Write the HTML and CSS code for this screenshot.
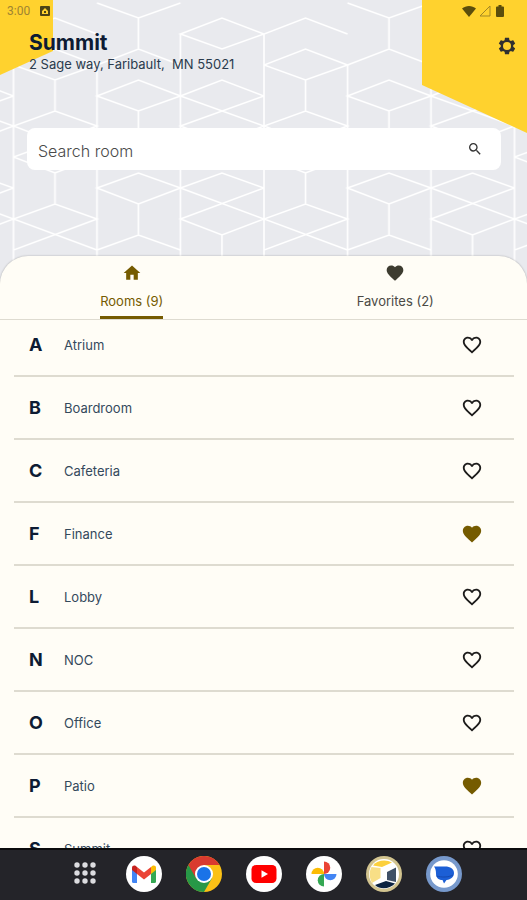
FILE: index.html
```html
<!DOCTYPE html>
<html lang="en">
  <head>
    <meta charset="utf-8">
    <meta name="viewport" content="width=device-width, initial-scale=1">
    <title>Summit</title>
    <link rel="stylesheet" href="styles.css">
  </head>
  <body>
    <!-- shared icons -->
    <svg class="sprite" aria-hidden="true">
      <symbol id="heart" viewBox="0 0 24 24">
        <path d="M12 21.35l-1.45-1.32C5.4 15.36 2 12.28 2 8.5 2 5.42 4.42 3 7.5 3c1.74 0 3.41.81 4.5 2.09C13.09 3.81 14.76 3 16.5 3 19.58 3 22 5.42 22 8.5c0 3.78-3.4 6.86-8.55 11.54L12 21.35z"/>
      </symbol>
      <symbol id="heart-outline" viewBox="0 0 24 24">
        <path d="M16.5 3c-1.74 0-3.41.81-4.5 2.09C10.91 3.81 9.24 3 7.5 3 4.42 3 2 5.42 2 8.5c0 3.78 3.4 6.86 8.55 11.54L12 21.35l1.45-1.32C18.6 15.36 22 12.28 22 8.5 22 5.42 19.58 3 16.5 3zm-4.4 15.55l-.1.1-.1-.1C7.14 14.24 4 11.39 4 8.5 4 6.5 5.5 5 7.5 5c1.54 0 3.04.99 3.57 2.36h1.87C13.46 5.99 14.96 5 16.5 5c2 0 3.5 1.5 3.5 3.5 0 2.89-3.14 5.74-7.9 10.05z"/>
      </symbol>
    </svg>

    <header class="hero">
      <svg class="hero-pattern" aria-hidden="true">
        <defs>
          <pattern id="cubes" x="13.5" y="0" width="250.5" height="300" patternUnits="userSpaceOnUse">
            <g fill="none" stroke="#fff" stroke-width="1.6">
              <path d="M0 34 41.5 18 83.5 34M0 65 41.5 49 83.5 65 41.5 80ZM41.5 80V111M0 126 41.5 111 83.5 126 41.5 142ZM0 157 41.5 142 83.5 157 41.5 173ZM41.5 173V204M0 250 83.5 219 41.5 204 0 219 83.5 250M0 65V300"/>
              <path d="M83.5 3 125 18 167 3M125 18V49M83.5 65 125 49 167 65M83.5 96 125 80 167 96 125 111ZM125 111V142M83.5 188 125 173 167 188 125 204ZM125 204V235M83.5 250 125 235 167 250M83.5 65V300"/>
              <path d="M167 34 208.5 18 250.5 34 208.5 49ZM167 126 250.5 96 208.5 80 167 96 250.5 126 208.5 142ZM167 219 250.5 188 208.5 173 167 188 250.5 219 208.5 235ZM208.5 235V300M167 34V300M250.5 34V300M0 34V65"/>
            </g>
          </pattern>
        </defs>
        <rect width="100%" height="100%" fill="url(#cubes)"/>
      </svg>
      <div class="corner corner-left"></div>
      <div class="corner corner-right"></div>

      <div class="status-bar">
        <span class="clock">3:00</span>
        <svg width="10" height="10" viewBox="0 0 10 10"><path fill="#4d4316" fill-rule="evenodd" d="M1 0h8a1 1 0 0 1 1 1v8a1 1 0 0 1-1 1H1a1 1 0 0 1-1-1V1a1 1 0 0 1 1-1zm1 8h6V5L5 2 2 5zm2-1V5h2v2z"/></svg>
        <span class="spacer"></span>
        <svg class="wifi" width="14" height="12" viewBox="0 0 14 12"><path fill="#5b4d0c" d="M0 3.5C4 0 10 0 14 3.500L7 12z"/></svg>
        <svg class="signal" width="12" height="12" viewBox="0 0 12 12"><path fill="none" stroke="#a38724" d="M1 11 11 1V11z"/></svg>
        <svg class="battery" width="8" height="12" viewBox="0 0 8 12"><path fill="#5b4d0c" d="M2.500 0h3v1.500H7a1 1 0 0 1 1 1V11a1 1 0 0 1-1 1H1a1 1 0 0 1-1-1V2.500a1 1 0 0 1 1-1h1.500z"/></svg>
      </div>

      <div class="site">
        <div>
          <h1>Summit</h1>
          <p>2 Sage way, Faribault,&nbsp; MN 55021</p>
        </div>
        <button class="icon-button" aria-label="Settings">
          <svg width="20" height="20" viewBox="0 0 24 24"><path fill="#303030" d="M19.430 12.980c.04-.32.07-.64.07-.98s-.03-.66-.07-.98l2.110-1.650c.19-.15.24-.42.12-.64l-2-3.460c-.12-.22-.39-.3-.61-.22l-2.490 1c-.52-.4-1.080-.73-1.690-.98l-.38-2.650C14.460 2.180 14.250 2 14 2h-4c-.25 0-.46.18-.49.42l-.38 2.650c-.61.25-1.170.59-1.690.98l-2.490-1c-.23-.09-.49 0-.61.22l-2 3.460c-.13.22-.07.49.12.64l2.110 1.650c-.04.32-.07.65-.07.98s.03.66.07.98l-2.110 1.650c-.19.15-.24.42-.12.64l2 3.460c.12.22.39.3.61.22l2.490-1c.52.4 1.080.73 1.690.98l.38 2.650c.03.24.24.42.49.42h4c.25 0 .46-.18.49-.42l.38-2.650c.61-.25 1.170-.59 1.690-.98l2.490 1c.23.09.49 0 .61-.22l2-3.460c.12-.22.07-.49-.12-.64l-2.110-1.650zM12 16.800a4.800 4.800 0 1 1 0-9.600 4.800 4.800 0 0 1 0 9.600z"/></svg>
        </button>
      </div>

      <form class="search">
        <input type="search" placeholder="Search room" aria-label="Search room">
        <button class="icon-button" type="submit" aria-label="Search">
          <svg width="16" height="16" viewBox="0 0 24 24"><path fill="#333" d="M15.500 14h-.79l-.28-.27A6.470 6.470 0 0 0 16 9.500 6.500 6.500 0 1 0 9.500 16c1.610 0 3.090-.59 4.230-1.570l.27.28v.79l5 4.990L20.490 19l-4.990-5zm-6 0C7.010 14 5 11.990 5 9.500S7.010 5 9.500 5 14 7.010 14 9.500 11.990 14 9.500 14z"/></svg>
        </button>
      </form>
    </header>

    <main class="sheet">
      <nav class="tabs">
        <button class="tab active">
          <svg width="20" height="20" viewBox="0 0 24 24"><path d="M10 20v-6h4v6h5v-8h3L12 3 2 12h3v8z"/></svg>
          <span>Rooms (9)</span>
        </button>
        <button class="tab">
          <svg width="22" height="20"><use href="#heart"/></svg>
          <span>Favorites (2)</span>
        </button>
      </nav>

      <div class="list-scroll">
        <ul class="rooms">
          <li><b>A</b><span>Atrium</span><button class="fav" aria-label="Favorite Atrium"><svg><use href="#heart-outline"/></svg></button></li>
          <li><b>B</b><span>Boardroom</span><button class="fav" aria-label="Favorite Boardroom"><svg><use href="#heart-outline"/></svg></button></li>
          <li><b>C</b><span>Cafeteria</span><button class="fav" aria-label="Favorite Cafeteria"><svg><use href="#heart-outline"/></svg></button></li>
          <li><b>F</b><span>Finance</span><button class="fav on" aria-label="Favorite Finance"><svg><use href="#heart"/></svg></button></li>
          <li><b>L</b><span>Lobby</span><button class="fav" aria-label="Favorite Lobby"><svg><use href="#heart-outline"/></svg></button></li>
          <li><b>N</b><span>NOC</span><button class="fav" aria-label="Favorite NOC"><svg><use href="#heart-outline"/></svg></button></li>
          <li><b>O</b><span>Office</span><button class="fav" aria-label="Favorite Office"><svg><use href="#heart-outline"/></svg></button></li>
          <li><b>P</b><span>Patio</span><button class="fav on" aria-label="Favorite Patio"><svg><use href="#heart"/></svg></button></li>
          <li><b>S</b><span>Summit</span><button class="fav" aria-label="Favorite Summit"><svg><use href="#heart-outline"/></svg></button></li>
        </ul>
      </div>
    </main>

    <footer class="dock">
      <button aria-label="All apps">
        <svg viewBox="0 0 36 36" fill="#dcdce0"><circle cx="11" cy="9" r="2.700"/><circle cx="19" cy="9" r="2.700"/><circle cx="27" cy="9" r="2.700"/><circle cx="11" cy="17" r="2.700"/><circle cx="19" cy="17" r="2.700"/><circle cx="27" cy="17" r="2.700"/><circle cx="11" cy="25" r="2.700"/><circle cx="19" cy="25" r="2.700"/><circle cx="27" cy="25" r="2.700"/></svg>
      </button>
      <button aria-label="Gmail">
        <svg viewBox="0 0 36 36">
          <circle cx="18" cy="18" r="18" fill="#fff"/>
          <path fill="#4285f4" d="M6 12l5 4v11H7.500A1.500 1.500 0 0 1 6 25.500z"/>
          <path fill="#34a853" d="M30 12l-5 4v11h3.500a1.500 1.500 0 0 0 1.500-1.500z"/>
          <path fill="#fbbc04" d="M25 11l1.500-1.200c1.500-1 3.500 0 3.500 1.800V14l-5 4z"/>
          <path fill="#c5221f" d="M11 11L9.500 9.800C8 8.800 6 9.800 6 11.600V14l5 4z"/>
          <path fill="#ea4335" d="M11 11l7 5.500 7-5.500v7l-7 5.500-7-5.500z"/>
        </svg>
      </button>
      <button aria-label="Chrome">
        <svg viewBox="0 0 36 36">
          <circle cx="18" cy="18" r="18" fill="#fbc116"/>
          <path fill="#279847" d="M18 18 2.400 9A18 18 0 0 0 18 36l7.800-13.500z"/>
          <path fill="#d93a2f" d="M18 18 10.200 22.500 2.400 9A18 18 0 0 1 33.600 9H18z"/>
          <circle cx="18" cy="18" r="9" fill="#fff"/>
          <circle cx="18" cy="18" r="7" fill="#1a73e8"/>
        </svg>
      </button>
      <button aria-label="YouTube">
        <svg viewBox="0 0 36 36">
          <circle cx="18" cy="18" r="18" fill="#fff"/>
          <rect x="5.500" y="9" width="25" height="18" rx="4.500" fill="#f00"/>
          <path fill="#fff" d="M15.500 14.200v7.600L22 18z"/>
        </svg>
      </button>
      <button aria-label="Photos">
        <svg viewBox="0 0 36 36">
          <circle cx="18" cy="18" r="18" fill="#fff"/>
          <path fill="#ea4335" d="M18 5.500a6.250 6.250 0 0 1 0 12.500z"/>
          <path fill="#4285f4" d="M30.500 18a6.250 6.250 0 0 1-12.500 0z"/>
          <path fill="#34a853" d="M18 30.500a6.250 6.250 0 0 1 0-12.500z"/>
          <path fill="#fbbc04" d="M5.500 18a6.250 6.250 0 0 1 12.500 0z"/>
        </svg>
      </button>
      <button aria-label="Room booking">
        <svg viewBox="0 0 36 36">
          <circle cx="18" cy="18" r="18" fill="#d2c490"/>
          <circle cx="18" cy="18" r="15" fill="#fff"/>
          <path fill="#fcd03c" d="M7 9.500C11 4 20 3 26 6.500L16 11z"/>
          <path fill="#f8df86" d="M5.500 11 14.500 12V22L6 27C3 21 3 16 5.500 11z"/>
          <path fill="#3f5066" d="M21 16l9-4.500V26l-9-2z"/>
          <path fill="#0c2340" d="M9 29l11-4 9 2.500C24 33 14 34 9 29z"/>
        </svg>
      </button>
      <button aria-label="Messages">
        <svg viewBox="0 0 36 36">
          <circle cx="18" cy="18" r="18" fill="#7799cc"/>
          <circle cx="18" cy="18" r="13.800" fill="#fff"/>
          <path fill="#1c5fd6" d="M8 10.500h11c5.500 0 9 2.500 9 6.500s-3 6.500-7.500 7L18 27.500 16.500 24C12 24 10 21.500 10 17.500c0-3-.5-5-2-7z"/>
          <path fill="none" stroke="#1549b0" stroke-width="1" d="M10.500 20c5 1.500 12 1.500 16.500-1"/>
        </svg>
      </button>
    </footer>
  </body>
</html>
```
FILE: styles.css
```css
:root {
  --yellow: #ffd22e;
  --gold: #755b00;
  --navy: #0d1b33;
  --paper: #fffdf6;
  --line: #dedbd0;
}
* {
  box-sizing: border-box;
}
html,
body {
  height: 100%;
}
body {
  display: flex;
  flex-direction: column;
  margin: 0;
  overflow: hidden;
  background: #e9eaee;
  color: var(--navy);
  font-family: Inter, "Open Sans", sans-serif;
}
h1,
p,
ul {
  margin: 0;
  padding: 0;
}
button {
  padding: 0;
  border: 0;
  background: none;
  color: inherit;
  font: inherit;
  cursor: pointer;
}
svg {
  display: block;
}
.sprite {
  display: none;
}

/* header */
.hero {
  position: relative;
  flex: none;
  padding-bottom: 86px;
}
.hero-pattern {
  position: absolute;
  top: 0;
  left: 0;
  width: 100%;
  height: 300px;
}
.corner {
  position: absolute;
  top: 0;
  background: var(--yellow);
}
.corner-left {
  left: 0;
  width: 53px;
  height: 75px;
  clip-path: polygon(0 0, 100% 0, 100% 68%, 0 100%);
}
.corner-right {
  right: 0;
  width: 105px;
  height: 133px;
  clip-path: polygon(0 0, 100% 0, 100% 100%, 0 64%);
}
.status-bar,
.site,
.search {
  position: relative;
  display: flex;
  align-items: center;
}
.status-bar {
  height: 22px;
  padding: 0 23px 0 7px;
  gap: 3px;
}
.clock {
  margin-right: 7px;
  color: #a08432;
  font: 12px/22px Roboto, sans-serif;
}
.spacer {
  flex: 1;
}
.battery {
  margin-left: 2px;
}
.site {
  justify-content: space-between;
  padding: 9px 10px 0 29px;
}
.site h1 {
  font-size: 21px;
  font-weight: 700;
  line-height: 24px;
}
.site p {
  color: #2a3b4d;
  font-size: 13px;
  line-height: 18px;
}
.site .icon-button {
  align-self: flex-start;
  padding: 5px 0;
}
.search {
  height: 42px;
  margin: 55px 26px 0 27px;
  padding: 0 18px 0 11px;
  border-radius: 8px;
  background: #fff;
}
.search input {
  flex: 1;
  min-width: 0;
  padding: 4px 0 0;
  border: 0;
  outline: 0;
  background: none;
  color: #333;
  font: 300 16px/24px Inter, sans-serif;
}
.search input::placeholder {
  color: #4a4a4a;
  opacity: 1;
}

/* sheet */
.sheet {
  position: relative;
  display: flex;
  flex: 1;
  flex-direction: column;
  min-height: 0;
  border-radius: 28px 28px 0 0;
  background: var(--paper);
  box-shadow: 0 0 2px rgba(0, 0, 0, 0.3);
}
.tabs {
  display: flex;
  flex: none;
  border-bottom: 1px solid var(--line);
}
.tab {
  display: flex;
  flex: 1;
  flex-direction: column;
  align-items: center;
  padding-top: 7px;
  color: #4b4a45;
  font-size: 13px;
  line-height: 16px;
}
.tab svg {
  fill: #3d3c30;
}
.tab span {
  padding: 10px 0 7px;
  border-bottom: 3px solid transparent;
}
.tab.active {
  color: var(--gold);
}
.tab.active svg {
  fill: var(--gold);
}
.tab.active span {
  border-color: var(--gold);
}
.list-scroll {
  flex: 1;
  min-height: 0;
  overflow: hidden;
}
/* list sits slightly scrolled under the tabs */
.rooms {
  margin: -6px 13px 0 14px;
  list-style: none;
}
.rooms li {
  display: flex;
  align-items: center;
  height: 63px;
  padding: 0 31px 0 15px;
  border-bottom: 2px solid var(--line);
}
.rooms b {
  width: 35px;
  font-size: 18px;
}
.rooms span {
  flex: 1;
  color: #34495c;
  font-size: 13px;
}
.fav svg {
  width: 22px;
  height: 22px;
  fill: #1c1b1a;
}
.fav.on svg {
  fill: var(--gold);
}

/* launcher */
.dock {
  position: relative;
  display: flex;
  flex: none;
  align-items: center;
  justify-content: center;
  gap: 24px;
  height: 52px;
  padding-bottom: 2px;
  border-top: 2px solid #0b0b0d;
  background: #242429;
}
.dock svg {
  width: 36px;
  height: 36px;
}
```
